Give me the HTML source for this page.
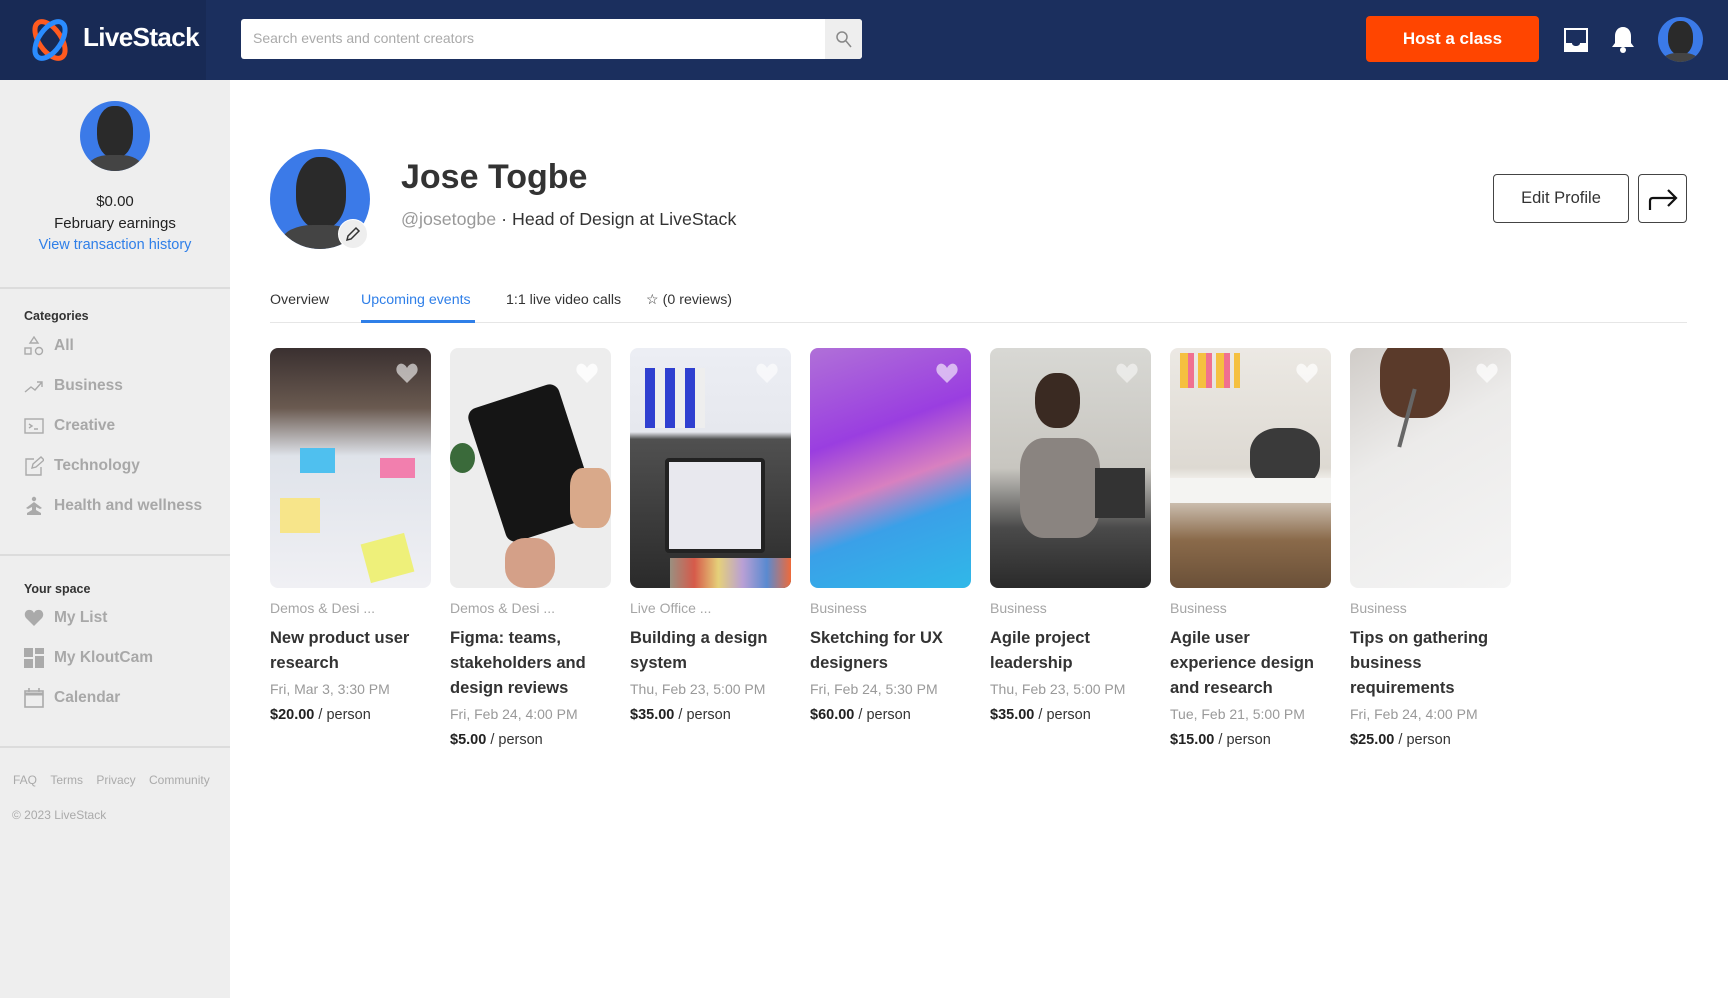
<!DOCTYPE html>
<html><head><meta charset="utf-8"><style>
*{box-sizing:border-box;margin:0;padding:0}
body{width:1728px;height:998px;overflow:hidden;font-family:"Liberation Sans",sans-serif;background:#fff;position:relative;color:#222}
.hdr{position:absolute;left:0;top:0;width:1728px;height:80px;background:#1b2f5e}
.logobg{position:absolute;left:0;top:0;width:206px;height:80px;background:#182a55}
.abs{position:absolute}
.side{position:absolute;left:0;top:80px;width:230px;height:918px;background:#eeeeee}
.hr{position:absolute;left:0;width:230px;height:2px;background:#dcdcdc}
.cat{position:absolute;left:24px;font-size:15.5px;font-weight:bold;color:#a8a8a8;display:flex;align-items:center;gap:10px}
.cat svg{width:20px;height:20px}
.card{position:absolute;top:348px;width:161px}
.img{width:161px;height:240px;border-radius:8px;position:relative;overflow:hidden}
.heart{position:absolute;right:12px;top:14px;width:24px;height:22px}
.cg{margin-top:12px;font-size:14px;color:#a5a5a5;height:20px}
.tt{margin-top:6px;font-size:16.5px;font-weight:bold;color:#333;line-height:25px}
.dt{font-size:14px;color:#999;margin-top:3px;line-height:20px}
.pr{font-size:14.5px;color:#333;margin-top:8px}
.pr b{color:#222}
.av{border-radius:50%;background:#3b7ae8;overflow:hidden;position:absolute}
</style></head><body>
<div class="hdr"><div class="logobg"></div>
<svg class="abs" style="left:26px;top:17px" width="48" height="46" viewBox="0 0 48 46"><ellipse cx="24" cy="23" rx="11" ry="21" transform="rotate(-35 24 23)" fill="none" stroke="#ff5a1f" stroke-width="5"/><ellipse cx="24" cy="23" rx="11" ry="21" transform="rotate(35 24 23)" fill="none" stroke="#2a8cff" stroke-width="5"/></svg>
<div class="abs" style="left:83px;top:22px;color:#fff;font-size:26px;font-weight:bold;letter-spacing:-0.6px">LiveStack</div>
<div class="abs" style="left:241px;top:19px;width:621px;height:40px;background:#fff;border-radius:3px"></div>
<div class="abs" style="left:825px;top:19px;width:37px;height:40px;background:#eee;border-radius:0 3px 3px 0"></div>
<svg class="abs" style="left:835px;top:30px" width="17" height="18" viewBox="0 0 17 18"><circle cx="7" cy="7" r="5" fill="none" stroke="#888" stroke-width="1.5"/><path d="M11 11l5 6" stroke="#888" stroke-width="1.5"/></svg>
<div class="abs" style="left:253px;top:30px;font-size:14px;color:#aaa">Search events and content creators</div>
<div class="abs" style="left:1366px;top:16px;width:173px;height:46px;background:#ff4500;border-radius:4px;color:#fff;font-weight:bold;font-size:17px;text-align:center;line-height:46px">Host a class</div>
<svg class="abs" style="left:1563px;top:27px" width="26" height="26" viewBox="0 0 26 26"><path d="M1 1h24v24H1z" fill="#fff"/><path d="M3 3h20v13h-6c0 2-2 3-4 3s-4-1-4-3H3z" fill="#1b2f5e"/></svg>
<svg class="abs" style="left:1611px;top:26px" width="24" height="28" viewBox="0 0 24 28"><path d="M12 1c-5 0-8 4-8 9v7l-3 4h22l-3-4v-7c0-5-3-9-8-9z" fill="#fff"/><circle cx="12" cy="24" r="3" fill="#fff"/></svg>
<div class="av" style="left:1658px;top:17px;width:45px;height:45px"><div style="position:absolute;left:10px;top:4px;width:25px;height:34px;border-radius:45%;background:#2a2a2a"></div><div style="position:absolute;left:4px;top:36px;width:37px;height:20px;border-radius:40%;background:#444"></div></div>
</div>
<div class="side">
<div class="av" style="left:80px;top:21px;width:70px;height:70px"><div style="position:absolute;left:17px;top:5px;width:36px;height:52px;border-radius:45%;background:#2a2a2a"></div><div style="position:absolute;left:8px;top:54px;width:54px;height:30px;border-radius:40%;background:#444"></div></div>
<div class="abs" style="left:0;top:113px;width:230px;text-align:center;font-size:15px">$0.00</div>
<div class="abs" style="left:0;top:135px;width:230px;text-align:center;font-size:15px">February earnings</div>
<div class="abs" style="left:0;top:157px;width:230px;text-align:center;font-size:14.5px;color:#2f7fe8">View transaction history</div>
<div class="hr" style="top:207px"></div>
<div class="abs" style="left:24px;top:229px;font-size:12.5px;font-weight:bold;color:#333">Categories</div>
<div class="cat" style="top:256px"><svg viewBox="0 0 20 20" fill="none" stroke="#aaa" stroke-width="1.4"><path d="M10 1l4 6H6z"/><rect x="1" y="12" width="6" height="6"/><circle cx="15" cy="15" r="3.5"/></svg>All</div>
<div class="cat" style="top:296px"><svg viewBox="0 0 20 20" fill="none" stroke="#aaa" stroke-width="1.4"><path d="M1 16l6-5 4 3 7-8M13 6h5v5"/></svg>Business</div>
<div class="cat" style="top:336px"><svg viewBox="0 0 20 20" fill="none" stroke="#aaa" stroke-width="1.4"><rect x="1" y="3" width="18" height="14"/><path d="M5 8l3 2-3 2M10 13h4"/></svg>Creative</div>
<div class="cat" style="top:376px"><svg viewBox="0 0 20 20" fill="none" stroke="#aaa" stroke-width="1.4"><path d="M10 3H2v16h15v-8M8 12l1-4 8-7 3 3-8 7z"/></svg>Technology</div>
<div class="cat" style="top:416px"><svg viewBox="0 0 20 20" fill="#aaa"><circle cx="10" cy="3" r="2.2"/><path d="M2 12l8-6 8 6-2 1-4-2v3l5 3v2H3v-2l5-3v-3l-4 2z"/></svg>Health and wellness</div>
<div class="hr" style="top:474px"></div>
<div class="abs" style="left:24px;top:502px;font-size:12.5px;font-weight:bold;color:#333">Your space</div>
<div class="cat" style="top:528px"><svg viewBox="0 0 20 20" fill="#aaa"><path d="M10 18L2 10C-1 6 2 1 6 2c2 0 3 1 4 3 1-2 2-3 4-3 4-1 7 4 4 8z"/></svg>My List</div>
<div class="cat" style="top:568px"><svg viewBox="0 0 20 20" fill="#aaa"><rect x="0" y="0" width="9" height="9"/><rect x="11" y="0" width="9" height="6"/><rect x="0" y="11" width="9" height="9"/><rect x="11" y="8" width="9" height="12"/></svg>My KloutCam</div>
<div class="cat" style="top:608px"><svg viewBox="0 0 20 20" fill="none" stroke="#aaa" stroke-width="1.6"><rect x="1" y="3" width="18" height="16"/><path d="M1 6h18" stroke-width="3"/><path d="M5 0v4M15 0v4"/></svg>Calendar</div>
<div class="hr" style="top:666px"></div>
<div class="abs" style="left:13px;top:693px;font-size:12px;color:#aaa;word-spacing:0">FAQ&nbsp;&nbsp;&nbsp;&nbsp;Terms&nbsp;&nbsp;&nbsp;&nbsp;Privacy&nbsp;&nbsp;&nbsp;&nbsp;Community</div>
<div class="abs" style="left:12px;top:728px;font-size:12px;color:#aaa">© 2023 LiveStack</div>
</div>
<div class="av" style="left:270px;top:149px;width:100px;height:100px"><div style="position:absolute;left:26px;top:8px;width:50px;height:72px;border-radius:45%;background:#2a2a2a"></div><div style="position:absolute;left:12px;top:76px;width:76px;height:40px;border-radius:40%;background:#444"></div></div>
<div class="abs" style="left:338px;top:219px;width:30px;height:30px;border-radius:50%;background:#eee;border:1px solid #fff"></div>
<svg class="abs" style="left:345px;top:226px" width="16" height="16" viewBox="0 0 16 16"><path d="M2 14l1-4 8-8 3 3-8 8z" fill="none" stroke="#333" stroke-width="1.5"/></svg>
<div class="abs" style="left:401px;top:158px;font-size:34px;font-weight:bold;color:#333">Jose Togbe</div>
<div class="abs" style="left:401px;top:209px;font-size:17.8px;color:#333"><span style="color:#999">@josetogbe</span> · Head of Design at LiveStack</div>
<div class="abs" style="left:1493px;top:174px;width:136px;height:49px;border:1.5px solid #444;border-radius:4px;text-align:center;line-height:46px;font-size:16.5px;color:#333">Edit Profile</div>
<div class="abs" style="left:1638px;top:174px;width:49px;height:49px;border:1.5px solid #444;border-radius:4px"></div>
<svg class="abs" style="left:1648px;top:186px" width="30" height="26" viewBox="0 0 30 26"><path d="M2 24v-9c0-2 1-3 3-3h22M20 4l8 8-8 8" fill="none" stroke="#111" stroke-width="2.2"/></svg>
<div class="abs" style="left:270px;top:292px;font-size:14.2px;color:#333">Overview</div>
<div class="abs" style="left:361px;top:292px;font-size:14.2px;color:#2f7fe8">Upcoming events</div>
<div class="abs" style="left:506px;top:292px;font-size:14.2px;color:#333">1:1 live video calls</div>
<div class="abs" style="left:646px;top:292px;font-size:14.2px;color:#333">☆ (0 reviews)</div>
<div class="abs" style="left:270px;top:322px;width:1417px;height:1px;background:#e6e6e6"></div>
<div class="abs" style="left:361px;top:320px;width:114px;height:3px;background:#2f7fe8"></div>

<div class="card" style="left:270px"><div class="img" style="background:linear-gradient(180deg,#3a3030 0%,#6a5a50 25%,#dfe3ea 45%,#f0f0f4 100%)"><div style="position:absolute;left:10px;top:150px;width:40px;height:35px;background:#f7e58a"></div><div style="position:absolute;left:95px;top:190px;width:45px;height:40px;background:#eef07a;transform:rotate(-15deg)"></div><div style="position:absolute;left:30px;top:100px;width:35px;height:25px;background:#4fc0ef"></div><div style="position:absolute;left:110px;top:110px;width:35px;height:20px;background:#f27fae"></div><svg class="heart" viewBox="0 0 24 22"><path d="M12 21L3 12C-1 7 3 0 8 2c2 1 3 2 4 4 1-2 2-3 4-4 5-2 9 5 5 10z" fill="#fff" opacity=".6"/></svg></div><div class="cg">Demos &amp; Desi ...</div><div class="tt">New product user research</div><div class="dt">Fri, Mar 3, 3:30 PM</div><div class="pr"><b>$20.00</b> / person</div></div>

<div class="card" style="left:450px"><div class="img" style="background:#ededed"><div style="position:absolute;left:35px;top:45px;width:95px;height:140px;background:#151515;border-radius:10px;transform:rotate(-18deg)"></div><div style="position:absolute;left:0;top:95px;width:25px;height:30px;background:#3a6a3a;border-radius:50%"></div><div style="position:absolute;left:120px;top:120px;width:41px;height:60px;background:#d9a98a;border-radius:30%"></div><div style="position:absolute;left:55px;top:190px;width:50px;height:50px;background:#d4a088;border-radius:40%"></div><svg class="heart" viewBox="0 0 24 22"><path d="M12 21L3 12C-1 7 3 0 8 2c2 1 3 2 4 4 1-2 2-3 4-4 5-2 9 5 5 10z" fill="#fff" opacity=".8"/></svg></div><div class="cg">Demos &amp; Desi ...</div><div class="tt">Figma: teams, stakeholders and design reviews</div><div class="dt">Fri, Feb 24, 4:00 PM</div><div class="pr"><b>$5.00</b> / person</div></div>

<div class="card" style="left:630px"><div class="img" style="background:linear-gradient(180deg,#eceef4 0%,#e6e8ee 35%,#505050 38%,#2a2a2a 100%)"><div style="position:absolute;left:35px;top:110px;width:100px;height:95px;background:#e8e8ee;border-radius:4px;border:4px solid #222"></div><div style="position:absolute;left:40px;top:210px;width:121px;height:30px;background:linear-gradient(90deg,#9a8f80,#d65a4a,#e5d07a,#b9a0d5,#5a8ad0,#ee6a3a)"></div><div style="position:absolute;left:15px;top:20px;width:60px;height:60px;background:repeating-linear-gradient(90deg,#3040d0 0 10px,#eee 10px 20px)"></div><svg class="heart" viewBox="0 0 24 22"><path d="M12 21L3 12C-1 7 3 0 8 2c2 1 3 2 4 4 1-2 2-3 4-4 5-2 9 5 5 10z" fill="#fff" opacity=".6"/></svg></div><div class="cg">Live Office ...</div><div class="tt">Building a design system</div><div class="dt">Thu, Feb 23, 5:00 PM</div><div class="pr"><b>$35.00</b> / person</div></div>

<div class="card" style="left:810px"><div class="img" style="background:linear-gradient(160deg,#b070d8 0%,#9a3ee0 35%,#d880c0 55%,#3aa0e8 70%,#30b8e8 100%)"><svg class="heart" viewBox="0 0 24 22"><path d="M12 21L3 12C-1 7 3 0 8 2c2 1 3 2 4 4 1-2 2-3 4-4 5-2 9 5 5 10z" fill="#fff" opacity=".6"/></svg></div><div class="cg">Business</div><div class="tt">Sketching for UX designers</div><div class="dt">Fri, Feb 24, 5:30 PM</div><div class="pr"><b>$60.00</b> / person</div></div>

<div class="card" style="left:990px"><div class="img" style="background:linear-gradient(180deg,#d8d8d4 0%,#c8c6c0 50%,#4a4a4a 75%,#2a2a2a 100%)"><div style="position:absolute;left:45px;top:25px;width:45px;height:55px;background:#3a2a22;border-radius:45%"></div><div style="position:absolute;left:30px;top:90px;width:80px;height:100px;background:#8a8480;border-radius:30%"></div><div style="position:absolute;left:105px;top:120px;width:50px;height:50px;background:#333"></div><svg class="heart" viewBox="0 0 24 22"><path d="M12 21L3 12C-1 7 3 0 8 2c2 1 3 2 4 4 1-2 2-3 4-4 5-2 9 5 5 10z" fill="#fff" opacity=".5"/></svg></div><div class="cg">Business</div><div class="tt">Agile project leadership</div><div class="dt">Thu, Feb 23, 5:00 PM</div><div class="pr"><b>$35.00</b> / person</div></div>

<div class="card" style="left:1170px"><div class="img" style="background:linear-gradient(180deg,#ece9e4 0%,#ddd9d2 50%,#f2f0ec 55%,#8a6a4a 80%,#6a5038 100%)"><div style="position:absolute;left:10px;top:5px;width:60px;height:35px;background:repeating-linear-gradient(90deg,#f5c040 0 8px,#f07090 8px 14px,transparent 14px 18px)"></div><div style="position:absolute;left:80px;top:80px;width:70px;height:60px;background:#3a3a3a;border-radius:40%"></div><div style="position:absolute;left:0;top:130px;width:161px;height:25px;background:#f4f4f2"></div><svg class="heart" viewBox="0 0 24 22"><path d="M12 21L3 12C-1 7 3 0 8 2c2 1 3 2 4 4 1-2 2-3 4-4 5-2 9 5 5 10z" fill="#fff" opacity=".7"/></svg></div><div class="cg">Business</div><div class="tt">Agile user experience design and research</div><div class="dt">Tue, Feb 21, 5:00 PM</div><div class="pr"><b>$15.00</b> / person</div></div>

<div class="card" style="left:1350px"><div class="img" style="background:linear-gradient(150deg,#d0ccc8 0%,#ecebea 40%,#f4f4f4 100%)"><div style="position:absolute;left:30px;top:-10px;width:70px;height:80px;background:#5a3a2a;border-radius:40%"></div><div style="position:absolute;left:55px;top:40px;width:4px;height:60px;background:#666;transform:rotate(15deg)"></div><svg class="heart" viewBox="0 0 24 22"><path d="M12 21L3 12C-1 7 3 0 8 2c2 1 3 2 4 4 1-2 2-3 4-4 5-2 9 5 5 10z" fill="#fff" opacity=".7"/></svg></div><div class="cg">Business</div><div class="tt">Tips on gathering business requirements</div><div class="dt">Fri, Feb 24, 4:00 PM</div><div class="pr"><b>$25.00</b> / person</div></div>
</body></html>
